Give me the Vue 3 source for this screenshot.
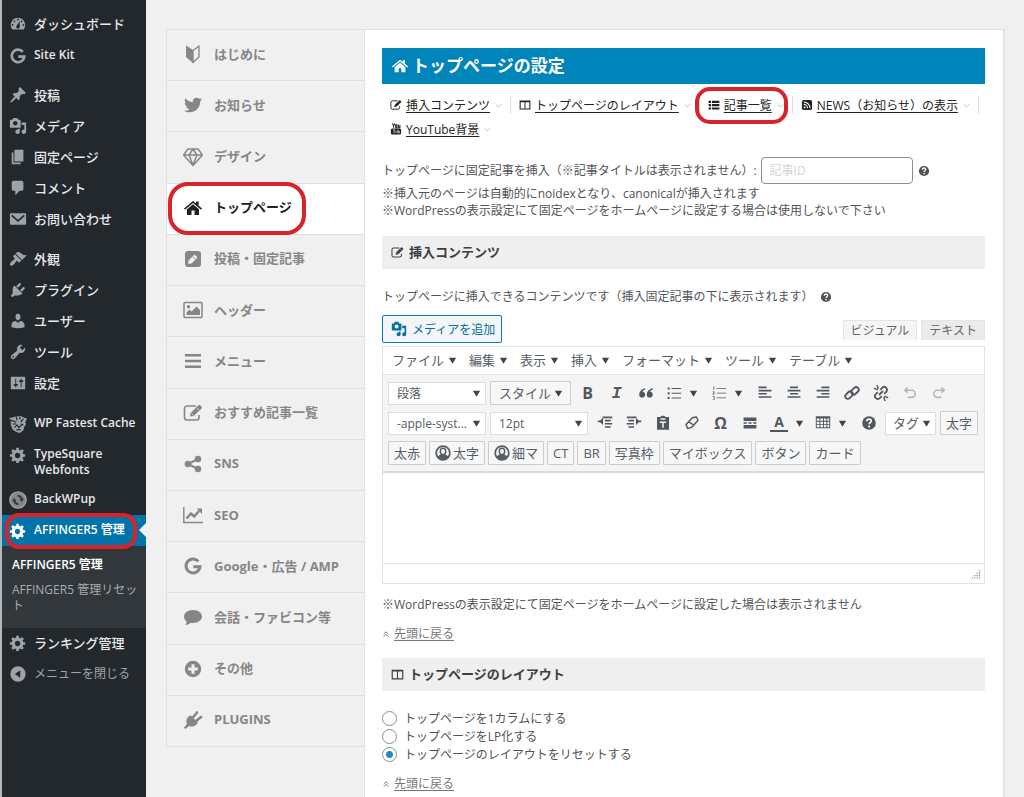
<script setup>
import { ref } from 'vue'

const icons = {
  dashboard: '<path fill-rule="evenodd" d="M3.76 16h12.48c1.1-1.37 1.76-3.11 1.76-5 0-4.42-3.58-8-8-8s-8 3.58-8 8c0 1.89.66 3.63 1.76 5zM10 4c.55 0 1 .45 1 1s-.45 1-1 1-1-.45-1-1 .45-1 1-1zM6 6c.55 0 1 .45 1 1s-.45 1-1 1-1-.45-1-1 .45-1 1-1zm8 0c.55 0 1 .45 1 1s-.45 1-1 1-1-.45-1-1 .45-1 1-1zm-5.37 5.55L12 7v6c0 1.1-.9 2-2 2s-2-.9-2-2c0-.57.24-1.08.63-1.45zM4 10c.55 0 1 .45 1 1s-.45 1-1 1-1-.45-1-1 .45-1 1-1zm12 0c.55 0 1 .45 1 1s-.45 1-1 1-1-.45-1-1 .45-1 1-1z"/>',
  google: '<path fill="none" stroke="currentColor" stroke-width="3" d="M15.4 5.4A7 7 0 1 0 17 10.8H10.3"/>',
  pin: '<path d="M10.44 3.02l1.82-1.82 6.36 6.35-1.83 1.82c-1.05-.68-2.48-.57-3.41.36l-.75.75c-.92.93-1.04 2.35-.35 3.41l-1.83 1.82-2.41-2.41-2.8 2.79c-.42.42-3.38 2.71-3.8 2.29s1.86-3.39 2.28-3.81l2.79-2.79L4.1 9.36l1.83-1.82c1.05.69 2.48.57 3.4-.36l.75-.75c.93-.92 1.05-2.35.36-3.41z"/>',
  media: '<path fill-rule="evenodd" d="M13 11V4c0-.55-.45-1-1-1h-1.67L9 1H5L3.67 3H2c-.55 0-1 .45-1 1v7c0 .55.45 1 1 1h10c.55 0 1-.45 1-1zM7 4.5c1.38 0 2.5 1.12 2.5 2.5S8.38 9.5 7 9.5 4.5 8.38 4.5 7 5.62 4.5 7 4.5zM14 6h5v10.5c0 1.38-1.12 2.5-2.5 2.5S14 17.88 14 16.5s1.12-2.5 2.5-2.5c.17 0 .34.02.5.05V9h-3V6zm-4 8.05V13h2v3.5c0 1.38-1.12 2.5-2.5 2.5S7 17.88 7 16.5 8.12 14 9.5 14c.17 0 .34.02.5.05z"/>',
  page: '<path d="M6 15V2h10v13H6zm-1 1h8v2H3V5h2v11z"/>',
  comment: '<path d="M5 2h9c1.1 0 2 .9 2 2v7c0 1.1-.9 2-2 2h-2l-5 5v-5H5c-1.1 0-2-.9-2-2V4c0-1.1.9-2 2-2z"/>',
  mail: '<rect x="1" y="3.5" width="18" height="13" rx="1.2"/><path d="M3 6l7 6.2L17 6" fill="none" stroke="#23282d" stroke-width="1.8"/>',
  brush: '<path d="M14.48 11.06L7.41 3.99l1.5-1.5c.5-.56 2.3-.47 3.51.32 1.21.8 1.43 1.28 2.91 2.1 1.18.64 2.45 1.26 4.45.85zm-.71.71L6.7 4.7 4.93 6.47c-.39.39-.39 1.02 0 1.41l1.06 1.06c.39.39.39 1.03 0 1.42-.6.6-1.43 1.11-2.21 1.69-.35.26-.7.53-1.01.84C1.43 14.23.4 16.08 1.4 17.07c.99 1 2.84-.03 4.18-1.36.31-.31.58-.66.85-1.02.57-.78 1.08-1.61 1.69-2.21.39-.39 1.02-.39 1.41 0l1.06 1.06c.39.39 1.02.39 1.41 0z"/>',
  plug: '<path d="M13.11 4.36L9.87 7.6 8 5.73l3.24-3.24c.35-.34 1.05-.2 1.56.32.52.51.66 1.21.31 1.55zm-8 1.77l.91-1.12 9.01 9.01-1.19.84c-.71.71-2.63 1.16-3.82 1.16H6.14L4.9 17.26c-.59.59-1.54.59-2.12 0-.59-.58-.59-1.53 0-2.12l1.24-1.24v-3.88c0-1.13.4-3.19 1.09-3.89zm7.26 3.97l3.24-3.24c.34-.35 1.04-.21 1.55.31.52.51.66 1.21.31 1.55l-3.24 3.25z"/>',
  user: '<path d="M10 9.25c-2.27 0-2.73-3.44-2.73-3.44C7 4.02 7.82 2 9.97 2c2.16 0 2.98 2.02 2.71 3.81 0 0-.41 3.44-2.68 3.44zm0 2.57L12.72 10c2.39 0 4.52 2.33 4.52 4.53v2.49s-3.65 1.13-7.24 1.13c-3.65 0-7.24-1.13-7.24-1.13v-2.49c0-2.25 1.94-4.48 4.47-4.48z"/>',
  wrench: '<path fill-rule="evenodd" d="M16.68 9.77c-1.34 1.34-3.3 1.67-4.95.99l-5.41 6.52c-.99.99-2.59.99-3.58 0s-.99-2.59 0-3.57l6.52-5.42c-.68-1.65-.35-3.61.99-4.95 1.28-1.28 3.12-1.62 4.72-1.06l-2.89 2.89 2.82 2.82 2.86-2.87c.53 1.58.18 3.39-1.08 4.65zM3.81 16.21c.4.39 1.04.39 1.43 0 .4-.4.4-1.04 0-1.43-.39-.4-1.03-.4-1.43 0-.39.39-.39 1.03 0 1.43z"/>',
  sliders: '<path fill-rule="evenodd" d="M18 16V4c0-.55-.45-1-1-1H3c-.55 0-1 .45-1 1v12c0 .55.45 1 1 1h14c.55 0 1-.45 1-1zM8 11h1c.55 0 1 .45 1 1s-.45 1-1 1H8v1.5c0 .28-.22.5-.5.5s-.5-.22-.5-.5V13H6c-.55 0-1-.45-1-1s.45-1 1-1h1V5.5c0-.28.22-.5.5-.5s.5.22.5.5V11zm5-2h-1c-.55 0-1-.45-1-1s.45-1 1-1h1V5.5c0-.28.22-.5.5-.5s.5.22.5.5V7h1c.55 0 1 .45 1 1s-.45 1-1 1h-1v5.5c0 .28-.22.5-.5.5s-.5-.22-.5-.5V9z"/>',
  cheetah: '<path d="M0 3l3 0 3-1 7-1 4 2 3 1-2 4 1 2-2 3-1 4-4 3-4-1-4-3-2-5 0-4z"/><path d="M4 6l4 2M8 2l1 4M12 2l0 3M16 4l-3 4M4 10l4 0M6 14l3-3 2 3 3-3M8 17l3-1 2 1M16 11l-3-1M1 5l3 2" fill="none" stroke="#23282d" stroke-width="1.3"/>',
  gear: '<path fill-rule="evenodd" d="M18 12h-2.18c-.17.7-.44 1.35-.81 1.93l1.54 1.54-2.1 2.1-1.54-1.54c-.58.36-1.23.63-1.91.79V19H8v-2.18c-.68-.16-1.33-.43-1.91-.79l-1.54 1.54-2.12-2.12 1.54-1.54c-.36-.58-.63-1.23-.79-1.91H1V9.03h2.17c.16-.7.44-1.35.8-1.94L2.43 5.55l2.1-2.1 1.54 1.54c.58-.37 1.24-.64 1.93-.81V2h3v2.18c.68.16 1.33.43 1.91.79l1.54-1.54 2.12 2.12-1.54 1.54c.36.59.64 1.24.8 1.94H18V12zm-8.5 1.5c1.66 0 3-1.34 3-3s-1.34-3-3-3-3 1.34-3 3 1.34 3 3 3z"/>',
  backup: '<circle cx="10" cy="10" r="9" fill="#85888b" stroke="currentColor" stroke-width="1.6"/><path d="M6 11.500a4.500 4.500 0 0 0 4.500 3M14 8.500a4.500 4.500 0 0 0-4.500-3" fill="none" stroke="#32373c" stroke-width="2"/><path d="M3.500 12L5.500 7.500l3 4zM16.500 8L14.500 12.500l-3-4z" fill="#32373c"/>',
  collapse: '<path fill-rule="evenodd" d="M10 1.500a8.500 8.500 0 1 0 0 17 8.500 8.500 0 0 0 0-17zM12.500 5.800v8.400L6.500 10z"/>',
  leaf: '<path d="M3 1.500l7 4.500v13l-7-6z"/><path d="M10 6.500l6-4.500v11l-6 5.500z" fill="none" stroke="currentColor" stroke-width="1.3" stroke-linejoin="round"/>',
  twitter: '<path transform="translate(1 1) scale(.0352)" d="M459.370 151.716c.325 4.548.325 9.097.325 13.645 0 138.720-105.583 298.558-298.558 298.558-59.452 0-114.680-17.219-161.137-47.106 8.447.974 16.568 1.299 25.340 1.299 49.055 0 94.213-16.568 130.274-44.832-46.132-.975-84.792-31.188-98.112-72.772 6.498.974 12.995 1.624 19.818 1.624 9.421 0 18.843-1.300 27.614-3.573-48.081-9.747-84.143-51.980-84.143-102.985v-1.299c13.969 7.797 30.214 12.670 47.431 13.319-28.264-18.843-46.781-51.005-46.781-87.391 0-19.492 5.197-37.360 14.294-52.954 51.655 63.675 129.300 105.258 216.365 109.807-1.624-7.797-2.599-15.918-2.599-24.040 0-57.828 46.782-104.934 104.934-104.934 30.213 0 57.502 12.670 76.670 33.137 23.715-4.548 46.456-13.320 66.599-25.340-7.798 24.366-24.366 44.833-46.132 57.827 21.117-2.273 41.584-8.122 60.426-16.243-14.292 20.791-32.161 39.308-52.628 54.253z"/>',
  diamond: '<path d="M5 2h10l4.500 6L10 18.500.5 8zM.5 8h19M10 18L6 8l4-6 4 6z" fill="none" stroke="currentColor" stroke-width="1.500" stroke-linejoin="round"/>',
  home: '<path d="M1 10.500L10 3l3 2.500V3.500h2.600V7.600l3.400 2.900-1 1.200-8-6.700-8 6.700z"/><path d="M4 11.300l6-5 6 5V17h-4.500v-4.500h-3V17H4z"/>',
  penSquare: '<rect x="2" y="2" width="16" height="16" rx="3"/><path d="M5 15l.8-3.800 5.700-5.700 3 3-5.700 5.700z" fill="#f0f0f0"/><path d="M9.500 7.500l3 3" stroke="currentColor" stroke-width=".9"/>',
  image: '<rect x="1" y="2.500" width="18" height="15" rx="1" fill="none" stroke="currentColor" stroke-width="1.500"/><circle cx="5.500" cy="6.800" r="1.700"/><path d="M3.500 15v-2.500l3-3 2 2 5-5 3.500 3.500v5z"/>',
  menu: '<path d="M2 3h16v2.500H2zM2 8.800h16v2.500H2zM2 14.500h16v2.500H2z"/>',
  edit: '<path d="M13 3H4a2.500 2.500 0 0 0-2.500 2.500v9A2.500 2.500 0 0 0 4 17h9.500a2.500 2.500 0 0 0 2.500-2.500V12" fill="none" stroke="currentColor" stroke-width="1.600"/><path d="M7 13.500l.6-3.600 7.800-7.600c.5-.5 1.300-.5 1.800 0l1.400 1.400c.5.5.5 1.300 0 1.800l-7.800 7.600z"/><path d="M8.500 10.500l2 2M14 5l2 2" stroke="#f0f0f0" stroke-width=".7"/>',
  share: '<circle cx="5" cy="10" r="3.300"/><circle cx="15" cy="5" r="3.200"/><circle cx="15" cy="15" r="3.200"/><path d="M15 5L5 10l10 5" fill="none" stroke="currentColor" stroke-width="2"/>',
  chart: '<path d="M.8 2v15.500H20" fill="none" stroke="currentColor" stroke-width="1.400"/><path d="M3.500 13.500l4.500-5 3.200 3L16 6" fill="none" stroke="currentColor" stroke-width="2.500"/><path d="M13.500 3.500H19V9z"/>',
  bubble: '<path d="M10 3c5 0 9 2.900 9 6.500S15 16 10 16c-.8 0-1.600-.1-2.400-.2C6 17.200 4.200 18 2 18c1-.9 1.600-1.900 1.700-3.400C2 13.400 1 11.500 1 9.500 1 5.900 5 3 10 3z"/>',
  plus: '<path fill-rule="evenodd" d="M10 1.800a8.200 8.200 0 1 0 0 16.400 8.200 8.200 0 0 0 0-16.400zM8.500 5.200h3v3.300h3.300v3h-3.300v3.300h-3v-3.300H5.200v-3h3.300z"/>',
  plug2: '<path d="M5 7l2.500-1.800 7.500 7.500-1.800 2c-2 2-5 2.500-7.200 1.200l-3.500 3L1 17.500l3-3.500c-1.200-2.200-.8-5 1-7z"/><path d="M9.500 8l4.500-5.500M12.500 11.500L18 7" stroke="currentColor" stroke-width="2.600" stroke-linecap="round"/>',
  columns: '<path fill-rule="evenodd" d="M1 2.500h18v15H1zM2.800 5.500v10.300h6.400V5.500zm8 0v10.300h6.400V5.500z"/>',
  list: '<path d="M1 3h4v3.500H1zM6.500 3H19v3.500H6.500zM1 8.500h4V12H1zM6.500 8.500H19V12H6.500zM1 14h4v3.500H1zM6.500 14H19v3.500H6.500z"/>',
  rss: '<rect x="1.500" y="1.500" width="17" height="17" rx="3"/><circle cx="6" cy="14" r="1.600" fill="#fff"/><path d="M4.500 9a6.500 6.500 0 0 1 6.500 6.500M4.500 5A10.500 10.500 0 0 1 15 15.500" fill="none" stroke="#fff" stroke-width="1.800"/>',
  youtube: '<rect x="1.500" y="9" width="17" height="10" rx="2.500"/><path d="M5 11.500h3.500M6.700 11.500V17M10 13v4M13 11.500v5h2.500v-3H13" fill="none" stroke="#fff" stroke-width="1.100"/><path d="M4 1l2 3.500V8M8 1L6 4.500M9.500 3v5h2V3zM14 3v5h2.500V3" fill="none" stroke="currentColor" stroke-width="1.700"/>',
  help: '<circle cx="10" cy="10" r="8.500"/><path d="M7.200 7.800c0-3.800 5.800-3.500 5.600-.3-.1 2-2.600 2-2.600 4.200" fill="none" stroke="#fff" stroke-width="2.200"/><rect x="9" y="13.200" width="2.300" height="2.300" fill="#fff"/>',
  down: '<path d="M2 6l8 8 8-8" fill="none" stroke="currentColor" stroke-width="2.600"/>',
  dblUp: '<path d="M4 10l6-5.500L16 10M4 16.500L10 11l6 5.500" fill="none" stroke="currentColor" stroke-width="2.300"/>',
  quote: '<path d="M9 4C4.500 5 1.500 8 1.500 12a3.700 3.700 0 1 0 4-3.600C6 7.200 7 6.200 9 5.500zM18.500 4C14 5 11 8 11 12a3.700 3.700 0 1 0 4-3.600c.5-1.200 1.500-2.200 3.500-2.900z"/>',
  ul: '<path d="M2 3h2.500v2.500H2zM2 9h2.500v2.500H2zM2 15h2.500v2.500H2zM7 3.700h12v1.200H7zM7 9.700h12v1.200H7zM7 15.700h12v1.200H7z"/>',
  ol: '<path d="M3 2h1v4H3zM2 8h2.500v2L3 11.500h1.500v.8H2v-1L3.700 9H2zM2 14h2.500v4.500H2v-.8h1.700v-1H2.500v-.8h1.200v-1H2zM7 3.700h12v1H7zM7 9.700h12v1H7zM7 15.700h12v1H7z"/>',
  alignL: '<path d="M2 2h10v2H2zM2 6h16v2H2zM2 10h10v2H2zM2 14h16v2H2z"/>',
  alignC: '<path d="M5 2h10v2H5zM2 6h16v2H2zM5 10h10v2H5zM2 14h16v2H2z"/>',
  alignR: '<path d="M8 2h10v2H8zM2 6h16v2H2zM8 10h10v2H8zM2 14h16v2H2z"/>',
  link: '<g fill="none" stroke="currentColor" stroke-width="2.300"><rect x="8.500" y="4" width="10.500" height="6.500" rx="3.250" transform="rotate(-45 13.750 7.250)"/><rect x="1" y="9.500" width="10.500" height="6.500" rx="3.250" transform="rotate(-45 6.250 12.750)"/></g>',
  unlink: '<g fill="none" stroke="currentColor" stroke-width="2.300"><path d="M9 6l2.500-2.500a3.500 3.500 0 0 1 5 5L14 11M11 14l-2.500 2.500a3.500 3.500 0 0 1-5-5L6 9M12.500 7.500l-5 5"/><path d="M1 4l5 2M5 0l1.500 5M19 16l-5-2M15 20l-1.500-5" stroke-width="1.800"/></g>',
  undo: '<path d="M5 6.500h7a4.500 4.500 0 0 1 0 9H7" fill="none" stroke="currentColor" stroke-width="2"/><path d="M7 2v9L2 6.500z"/>',
  redo: '<path d="M15 6.500H8a4.500 4.500 0 0 0 0 9h5" fill="none" stroke="currentColor" stroke-width="2"/><path d="M13 2v9l5-4.500z"/>',
  outdent: '<path d="M7 2h12v2H7zM10 6h7v2h-7zM10 10h9v2h-9zM10 14h7v2h-7zM7.500 3.500v9L4 9.200H1V6.800h3z"/>',
  indent: '<path d="M1 2h12v2H1zM3 6h7v2H3zM1 10h9v2H1zM3 14h7v2H3zM12.500 3.500v9L16 9.200h3V6.800h-3z"/>',
  paste: '<path d="M7 2.500c0-2 6-2 6 0h4.500V18.500h-15V2.500z"/><path d="M6 9h8M10 9v7M7 5h6" stroke="#f4f4f4" stroke-width="1.900"/>',
  eraser: '<path d="M2.500 12L10.500 3.500l5-1 2 4-8 9-5 1.500zM6 8.500l6 4" fill="none" stroke="currentColor" stroke-width="1.800" stroke-linejoin="round"/>',
  more: '<path d="M2 3h16v4.500H2zM2 9h4v2H2zM8 9h4v2H8zM14 9h4v2h-4zM2 12.500h16V17H2z"/>',
  table: '<path fill-rule="evenodd" d="M1 1.500h18v15H1zM2.200 4.500v2.700h3.300V4.500zm4.500 0v2.700H10V4.500zm4.500 0v2.700h3V4.500zm4.200 0v2.700h2.400V4.500zM2.200 8.400v2.700h3.300V8.400zm4.500 0v2.700H10V8.400zm4.500 0v2.700h3V8.400zm4.200 0v2.700h2.400V8.400zM2.200 12.300v3h3.300v-3zm4.500 0v3H10v-3zm4.500 0v3h3v-3zm4.200 0v3h2.400v-3z"/>',
  person: '<circle cx="10" cy="10" r="8.500" fill="none" stroke="currentColor" stroke-width="2.200"/><ellipse cx="10" cy="8" rx="3.400" ry="4" fill="none" stroke="currentColor" stroke-width="1.800"/><path d="M3 15c1.500-2 3-2.700 5-3 1.300.8 2.700.8 4 0 2 .3 3.500 1 5 3-2 3-4 4-7 4s-5-1-7-4z"/>',
  tri: '<path d="M2 4h16l-8 13z"/>',
  grip: '<path d="M15 2h2v2h-2zM15 6h2v2h-2zM11 6h2v2h-2zM15 10h2v2h-2zM11 10h2v2h-2zM7 10h2v2H7zM15 14h2v2h-2zM11 14h2v2h-2zM7 14h2v2H7zM3 14h2v2H3z"/>'
}

const menuGroups = [
  [['dashboard', 'ダッシュボード'], ['google', 'Site Kit', true]],
  [['pin', '投稿'], ['media', 'メディア'], ['page', '固定ページ'], ['comment', 'コメント'], ['mail', 'お問い合わせ']],
  [['brush', '外観'], ['plug', 'プラグイン'], ['user', 'ユーザー'], ['wrench', 'ツール'], ['sliders', '設定']]
]
const pluginMenu = [['cheetah', 'WP Fastest Cache'], ['gear', 'TypeSquare Webfonts'], ['backup', 'BackWPup']]

const tabs = [
  ['leaf', 'はじめに'], ['twitter', 'お知らせ'], ['diamond', 'デザイン'], ['home', 'トップページ'],
  ['penSquare', '投稿・固定記事'], ['image', 'ヘッダー'], ['menu', 'メニュー'], ['edit', 'おすすめ記事一覧'],
  ['share', 'SNS'], ['chart', 'SEO'], ['google', 'Google・広告 / AMP'], ['bubble', '会話・ファビコン等'],
  ['plus', 'その他'], ['plug2', 'PLUGINS']
]
const anchors = [
  ['edit', '挿入コンテンツ'], ['columns', 'トップページのレイアウト'], ['list', '記事一覧'],
  ['rss', 'NEWS（お知らせ）の表示'], ['youtube', 'YouTube背景']
]
const editorMenus = ['ファイル', '編集', '表示', '挿入', 'フォーマット', 'ツール', 'テーブル']
const layouts = ['トップページを1カラムにする', 'トップページをLP化する', 'トップページのレイアウトをリセットする']
const layout = ref(2)
const postId = ref('')
const row1 = [
  { n: '引用', i: 'quote' }, { n: '箇条書き', i: 'ul', m: true }, { n: '番号付き', i: 'ol', m: true },
  { n: '左寄せ', i: 'alignL' }, { n: '中央揃え', i: 'alignC' }, { n: '右寄せ', i: 'alignR' },
  { n: 'リンク', i: 'link' }, { n: 'リンク解除', i: 'unlink' }, { n: '取り消し', i: 'undo', off: true }, { n: 'やり直し', i: 'redo', off: true }
]
const row2 = [
  { n: 'インデント減', i: 'outdent' }, { n: 'インデント増', i: 'indent' }, { n: 'テキスト貼り付け', i: 'paste' }, { n: '書式クリア', i: 'eraser' }
]
const snippets = ['CT', 'BR', '写真枠', 'マイボックス', 'ボタン', 'カード']
</script>

<template>
  <div class="page">
    <nav class="side" aria-label="管理メニュー">
      <ul v-for="(g, gi) in menuGroups" :key="gi" class="group">
        <li v-for="m in g" :key="m[1]">
          <a href="#" class="item" :class="{ latin: m[2] }"><svg class="ic" viewBox="0 0 20 20" v-html="icons[m[0]]"></svg><span>{{ m[1] }}</span></a>
        </li>
      </ul>
      <ul class="group">
        <li v-for="m in pluginMenu" :key="m[1]">
          <a href="#" class="item latin" :class="m[0]"><svg class="ic" viewBox="0 0 20 20" v-html="icons[m[0]]"></svg><span>{{ m[1] }}</span></a>
        </li>
        <li>
          <a href="#" class="item latin current"><svg class="ic" viewBox="0 0 20 20" v-html="icons.gear"></svg><span>AFFINGER5 管理</span></a>
          <ul class="sub">
            <li><a href="#" class="on">AFFINGER5 管理</a></li>
            <li><a href="#">AFFINGER5 管理リセット</a></li>
          </ul>
        </li>
        <li><a href="#" class="item"><svg class="ic" viewBox="0 0 20 20" v-html="icons.gear"></svg><span>ランキング管理</span></a></li>
        <li><button type="button" class="item collapse"><svg class="ic" viewBox="0 0 20 20" v-html="icons.collapse"></svg><span>メニューを閉じる</span></button></li>
      </ul>
    </nav>

    <div class="body">
      <ul class="tabs">
        <li v-for="(t, ti) in tabs" :key="t[1]" :class="{ active: ti === 3 }">
          <a href="#"><svg viewBox="0 0 20 20" v-html="icons[t[0]]"></svg><span>{{ t[1] }}</span></a>
        </li>
      </ul>

      <main class="panel">
        <h1><svg viewBox="0 0 20 20" v-html="icons.home"></svg>トップページの設定</h1>
        <ul class="anchors">
          <li v-for="(a, ai) in anchors" :key="a[1]" :class="{ ringed: ai === 2 }">
            <svg class="lead" viewBox="0 0 20 20" v-html="icons[a[0]]"></svg>
            <a href="#">{{ a[1] }}</a>
            <svg class="chev" viewBox="0 0 20 20" v-html="icons.down"></svg>
          </li>
        </ul>

        <div class="field">
          <label for="post-id">トップページに固定記事を挿入（※記事タイトルは表示されません）:</label>
          <input id="post-id" v-model="postId" type="text" placeholder="記事ID">
          <svg class="help" viewBox="0 0 20 20" v-html="icons.help"></svg>
        </div>
        <p class="note">※挿入元のページは自動的にnoidexとなり、canonicalが挿入されます<br>※WordPressの表示設定にて固定ページをホームページに設定する場合は使用しないで下さい</p>

        <h2><svg viewBox="0 0 20 20" v-html="icons.edit"></svg>挿入コンテンツ</h2>
        <p class="desc">トップページに挿入できるコンテンツです（挿入固定記事の下に表示されます）<svg class="help" viewBox="0 0 20 20" v-html="icons.help"></svg></p>

        <div class="editor-top">
          <button type="button" class="add-media"><svg viewBox="0 0 20 20" v-html="icons.media"></svg>メディアを追加</button>
          <div class="modes">
            <button type="button">ビジュアル</button>
            <button type="button" class="alt">テキスト</button>
          </div>
        </div>
        <div class="editor">
          <div class="menubar">
            <button v-for="m in editorMenus" :key="m" type="button">{{ m }}<svg class="tri" viewBox="0 0 20 20" v-html="icons.tri"></svg></button>
          </div>
          <div class="toolbar">
            <div class="row">
              <span class="pick"><select aria-label="段落"><option>段落</option></select><svg class="tri" viewBox="0 0 20 20" v-html="icons.tri"></svg></span>
              <button type="button" class="box style">スタイル<svg class="tri" viewBox="0 0 20 20" v-html="icons.tri"></svg></button>
              <div class="tools">
                <button type="button" class="tool bold">B</button>
                <button type="button" class="tool ital">I</button>
                <button v-for="t in row1" :key="t.n" type="button" class="tool" :class="{ wide: t.m, off: t.off }" :aria-label="t.n">
                  <svg viewBox="0 0 20 20" v-html="icons[t.i]"></svg><svg v-if="t.m" class="tri" viewBox="0 0 20 20" v-html="icons.tri"></svg>
                </button>
              </div>
            </div>
            <div class="row">
              <span class="pick"><select aria-label="フォント"><option>-apple-syst...</option></select><svg class="tri" viewBox="0 0 20 20" v-html="icons.tri"></svg></span>
              <span class="pick"><select aria-label="文字サイズ"><option>12pt</option></select><svg class="tri" viewBox="0 0 20 20" v-html="icons.tri"></svg></span>
              <div class="tools">
                <button v-for="t in row2" :key="t.n" type="button" class="tool" :aria-label="t.n"><svg viewBox="0 0 20 20" v-html="icons[t.i]"></svg></button>
                <button type="button" class="tool omega">Ω</button>
                <button type="button" class="tool" aria-label="続きを読む"><svg viewBox="0 0 20 20" v-html="icons.more"></svg></button>
                <button type="button" class="tool wide color"><span>A</span><svg class="tri" viewBox="0 0 20 20" v-html="icons.tri"></svg></button>
                <button type="button" class="tool wide" aria-label="表"><svg viewBox="0 0 20 20" v-html="icons.table"></svg><svg class="tri" viewBox="0 0 20 20" v-html="icons.tri"></svg></button>
                <button type="button" class="tool" aria-label="ヘルプ"><svg viewBox="0 0 20 20" v-html="icons.help"></svg></button>
              </div>
              <button type="button" class="box tag">タグ<svg class="tri" viewBox="0 0 20 20" v-html="icons.tri"></svg></button>
              <button type="button" class="box">太字</button>
            </div>
            <div class="row snips">
              <button type="button" class="box">太赤</button>
              <button type="button" class="box"><svg class="person" viewBox="0 0 20 20" v-html="icons.person"></svg>太字</button>
              <button type="button" class="box"><svg class="person" viewBox="0 0 20 20" v-html="icons.person"></svg>細マ</button>
              <button v-for="s in snippets" :key="s" type="button" class="box">{{ s }}</button>
            </div>
          </div>
          <textarea aria-label="本文"></textarea>
          <div class="status"><svg viewBox="0 0 20 20" v-html="icons.grip"></svg></div>
        </div>
        <p class="after">※WordPressの表示設定にて固定ページをホームページに設定した場合は表示されません</p>
        <p class="back"><svg viewBox="0 0 20 20" v-html="icons.dblUp"></svg><a href="#">先頭に戻る</a></p>

        <h2><svg viewBox="0 0 20 20" v-html="icons.columns"></svg>トップページのレイアウト</h2>
        <div class="radios">
          <label v-for="(l, li) in layouts" :key="l"><input v-model="layout" type="radio" name="layout" :value="li">{{ l }}</label>
        </div>
        <p class="back"><svg viewBox="0 0 20 20" v-html="icons.dblUp"></svg><a href="#">先頭に戻る</a></p>
      </main>
    </div>
  </div>
</template>

<style>
html, body { height: 100%; }
body { background: #f0f0f0; overflow: hidden; }
#app { height: 100%; }
</style>

<style scoped>
* { box-sizing: border-box; }
ul, p, h1, h2 { margin: 0; padding: 0; list-style: none; }
button, input, select, textarea { font: inherit; color: inherit; margin: 0; }
button { border: 0; background: none; padding: 0; cursor: pointer; }
svg { display: block; flex: none; fill: currentColor; }
.page {
  display: flex; min-height: 100%;
  font-family: "Open Sans", "Noto Sans CJK JP", sans-serif;
  font-size: 12px; line-height: 17px; color: #505357;
}

.side { width: 146px; flex: none; background: #23282d; border-left: 2px solid #b4b6b8; padding-top: 9px; color: #e8e9ea; }
.group { margin-bottom: 9px; }
.item {
  position: relative; display: flex; align-items: flex-start; width: 100%; min-height: 31px;
  padding: 6px 8px 7px 7px; gap: 7px; color: inherit; text-decoration: none;
  font-size: 13px; text-align: left; line-height: 18px; font-weight: 500;
}
.item .ic { width: 18px; height: 18px; color: #9ea3a8; }
.item.latin { font-size: 12px; font-weight: 600; line-height: 16px; padding: 7px 4px 6px 7px; }
.item.cheetah .ic { width: 22px; height: 18px; margin: 0 -2px; }
.item.collapse { font-size: 12px; color: #a0a5aa; font-weight: 400; }
.item.current { background: #0073aa; color: #fff; }
.item.current .ic { color: #fff; }
.item.current::before {
  content: ""; position: absolute; right: 0; top: 8px;
  border: 7px solid transparent; border-left: 0; border-right-color: #f0f0f0;
}
.item.current::after {
  content: ""; position: absolute; inset: -2px 9px -3px 3px;
  border: 4px solid #d8232a; border-radius: 14px;
}
.sub { background: #32373c; padding: 9px 0 12px 10px; }
.sub a { display: block; color: #a6abb0; text-decoration: none; line-height: 16px; padding: 2px 0; margin-bottom: 5px; }
.sub li:last-child a { margin-bottom: 0; padding-right: 6px; }
.sub .on { color: #fff; font-weight: 600; }

.body { flex: 1; min-width: 0; display: flex; padding: 29px 19px 0 20px; }
.tabs {
  display: grid; grid-auto-rows: 1fr; align-self: flex-start; width: 198px; min-height: 718px; flex: none;
  border: 1px solid #dfdfdf; border-right: 0; border-bottom: 0;
}
.tabs li { position: relative; border-bottom: 1px solid #dfdfdf; }
.tabs a {
  display: flex; align-items: center; height: 100%; gap: 11px; padding: 0 0 2px 16px;
  color: #868686; text-decoration: none; font-size: 13px; font-weight: 700;
}
.tabs svg { width: 20px; height: 20px; }
.tabs .active { background: #fff; }
.tabs .active a { color: #222; }
.tabs .active::after {
  content: ""; position: absolute; inset: -2px 58px -1px 1px;
  border: 4px solid #d8232a; border-radius: 20px;
}

.panel { flex: 1; min-width: 0; background: #fff; border: 1px solid #e2e2e2; border-right-width: 2px; border-bottom: 0; padding: 18px 18px 0 17px; }
h1 { display: flex; align-items: center; gap: 3px; height: 36px; padding-left: 9px; background: #0085ba; color: #fff; font-size: 17px; line-height: 24px; font-weight: 600; }
h1 svg { width: 18px; height: 18px; }
h2 { display: flex; align-items: center; gap: 5px; height: 33px; padding-left: 9px; background: #efefef; color: #3c4043; font-size: 13px; font-weight: 600; }
h2 svg { width: 13px; height: 13px; }

.anchors { display: flex; flex-wrap: wrap; row-gap: 6px; margin: 12px 0 19px; color: #222; }
.anchors li { position: relative; display: flex; align-items: center; height: 18px; padding: 0 8px; border-right: 1px solid #ddd; }
.anchors li:last-child { border: 0; }
.anchors a { color: inherit; text-underline-offset: 2px; }
.lead { width: 12px; height: 12px; margin-right: 4px; }
.chev { width: 7px; height: 7px; margin-left: 5px; color: #bbb; }
.ringed::after { content: ""; position: absolute; inset: -9px 4px -10px -5px; border: 4px solid #d8232a; border-radius: 15px; }

.field { display: flex; align-items: center; }
.field input { width: 152px; height: 27px; margin: 0 5px 0 4px; padding: 0 8px; border: 1px solid #8a8f94; border-radius: 4px; background: #fff; }
.field input::placeholder { color: #d4d4d4; opacity: 1; }
.help { width: 12px; height: 12px; }
.note { margin: 1px 0 17px; }
.desc { display: flex; align-items: center; gap: 6px; margin: 19px 0 10px; }

.editor-top { display: flex; justify-content: space-between; align-items: flex-start; height: 31px; }
.add-media { display: flex; align-items: center; gap: 5px; height: 28px; padding: 0 6px 0 8px; border: 1px solid #007cba; border-radius: 2px; background: #f3f5f6; color: #0071a1; }
.add-media svg { width: 16px; height: 16px; }
.modes { display: flex; gap: 4px; padding-top: 5px; }
.modes button { padding: 1px 7px 0; border: 1px solid #e5e5e5; border-bottom: 0; background: #f5f5f5; color: #666; line-height: 18px; }
.modes .alt { background: #ebebeb; }
.editor { border: 1px solid #e2e2e2; font-size: 13px; color: #555d66; }
.menubar { display: flex; gap: 12px; height: 28px; padding: 0 9px; background: #fff; border-bottom: 1px solid #e5e5e5; }
.menubar button { display: flex; align-items: center; gap: 4px; font-size: 13px; }
.tri { width: 9px; height: 9px; color: #444; }
.toolbar { display: flex; flex-direction: column; gap: 4px; padding: 5px; background: #f4f4f4; border-bottom: 2px solid #d9d9d9; }
.row { display: flex; align-items: center; gap: 4px; min-height: 26px; }
.snips { gap: 3px; }
.pick { position: relative; width: 98px; flex: none; }
.pick select { appearance: none; display: block; width: 100%; height: 23px; padding: 0 18px 0 8px; border: 1px solid #ddd; border-radius: 0; background: #fff; font-size: 12px; }
.pick .tri { position: absolute; right: 5px; top: 7px; pointer-events: none; }
.box { display: flex; align-items: center; gap: 2px; height: 24px; padding: 0 5px; border: 1px solid #ccc; border-radius: 1px; background: #f7f7f7; font-size: 13px; white-space: nowrap; }
.box.style { width: 81px; padding: 0 8px; gap: 3px; }
.box.tag { padding: 0 4px 0 7px; gap: 3px; border-color: #ddd; background: #fff; height: 23px; }
.person { width: 16px; height: 16px; }
.tools { display: flex; margin: 0 -2px; }
.tool { display: flex; align-items: center; justify-content: center; width: 29px; height: 26px; color: #50575e; }
.tool svg { width: 16px; height: 16px; }
.tool .tri { width: 9px; height: 9px; }
.wide { width: 45px; gap: 7px; justify-content: flex-start; padding-left: 6px; }
.off { color: #b4b7ba; }
.bold { font-size: 16px; font-weight: 700; }
.ital { font: italic 700 17px "Liberation Mono", monospace; }
.omega { font-size: 16px; font-weight: 700; }
.color span { width: 18px; height: 17px; border-bottom: 2px solid #50575e; font-size: 14px; line-height: 14px; font-weight: 700; text-align: center; }
textarea { display: block; width: 100%; height: 90px; border: 0; resize: none; outline: 0; background: #fff; }
.status { display: flex; justify-content: flex-end; align-items: flex-end; height: 20px; padding: 2px; border-top: 1px solid #e5e5e5; color: #888; }
.status svg { width: 12px; height: 12px; }
.after { margin-top: 12px; }
.back { display: flex; align-items: center; gap: 4px; margin: 12px 0 16px; color: #777; }
.back svg { width: 8px; height: 8px; }
.back a { color: inherit; text-underline-offset: 2px; }
.radios { padding-top: 18px; }
.radios label { display: flex; align-items: center; gap: 7px; height: 18px; }
.radios input { appearance: none; width: 15px; height: 15px; border: 1px solid #8a8f94; border-radius: 50%; background: #fff; }
.radios input:checked { background: radial-gradient(circle, #1e8cbe 0 3px, #fff 4px); }
</style>
